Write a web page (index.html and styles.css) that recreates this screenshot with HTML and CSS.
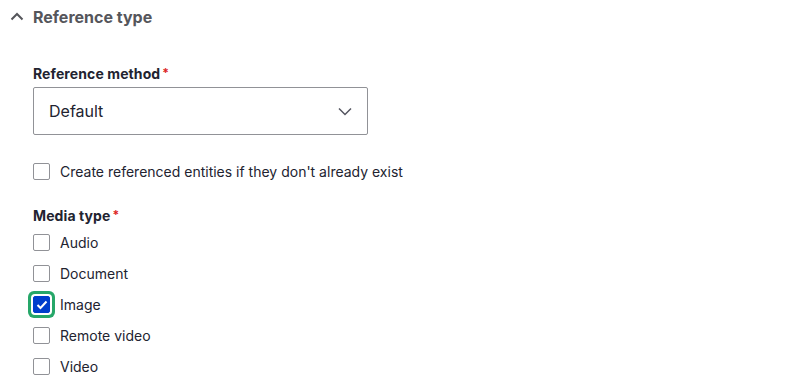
FILE: index.html
```html
<!DOCTYPE html>
<html>
<head>
<meta charset="utf-8">
<link rel="stylesheet" href="styles.css">
</head>
<body>
<details class="details" open>
  <summary class="summary">
    <svg class="summary-icon" width="14" height="9" viewBox="0 0 14 9"><path d="M1.5 7.5L7 2l5.5 5.5" fill="none" stroke="#55565b" stroke-width="2"/></svg>
    <span>Reference type</span>
  </summary>
  <div class="content">
    <div class="field">
      <label class="label">Reference method<span class="req">*</span></label>
      <div class="select">
        <span>Default</span>
        <svg width="14" height="9" viewBox="0 0 14 9"><path d="M1 1.5l6 6 6-6" fill="none" stroke="#545560" stroke-width="1.5"/></svg>
      </div>
    </div>
    <div class="check-row single">
      <span class="box"></span>
      <span class="check-label">Create referenced entities if they don't already exist</span>
    </div>
    <div class="field">
      <label class="label">Media type<span class="req">*</span></label>
      <div class="checks">
        <div class="check-row"><span class="box"></span><span class="check-label">Audio</span></div>
        <div class="check-row"><span class="box"></span><span class="check-label">Document</span></div>
        <div class="check-row"><span class="box checked"><svg width="12" height="10" viewBox="0 0 12 10"><path d="M1.5 5l3 3L10.5 1.5" fill="none" stroke="#fff" stroke-width="2"/></svg></span><span class="check-label">Image</span></div>
        <div class="check-row"><span class="box"></span><span class="check-label">Remote video</span></div>
        <div class="check-row"><span class="box"></span><span class="check-label">Video</span></div>
      </div>
    </div>
  </div>
</details>
</body>
</html>
```
FILE: styles.css
```css
html, body { margin: 0; padding: 0; background: #fff; }
body {
  font-family: Inter, "Noto Sans", sans-serif;
  color: #222330;
  width: 800px;
  height: 391px;
  overflow: hidden;
}
.details { display: block; }
.summary {
  list-style: none;
  display: flex;
  align-items: center;
  height: 34px;
  padding-left: 10px;
  color: #55565b;
  font-weight: 700;
  font-size: 16px;
}
.summary::-webkit-details-marker { display: none; }
.summary-icon { margin-right: 9px; margin-top: -1px; }
.content { padding: 31px 0 0 33px; }
.field { display: flex; flex-direction: column; }
.label {
  font-size: 14px;
  font-weight: 700;
  line-height: 18px;
  margin-bottom: 4px;
  color: #222330;
  letter-spacing: 0.1px;
}
.req {
  color: #dc2323;
  font-size: 12px;
  margin-left: 2px;
  vertical-align: top;
  position: relative;
  top: -1px;
}
.select {
  box-sizing: border-box;
  width: 335px;
  height: 48px;
  border: 1px solid #919297;
  border-radius: 2px;
  display: flex;
  align-items: center;
  justify-content: space-between;
  padding: 0 15px 0 15px;
  font-size: 16px;
  color: #222330;
}
.check-row {
  display: flex;
  align-items: center;
  height: 31px;
}
.check-row.single { margin-top: 21px; margin-bottom: 20px; }
.box {
  box-sizing: border-box;
  width: 17px;
  height: 17px;
  border: 1px solid #919297;
  border-radius: 2px;
  margin-right: 10px;
  display: flex;
  align-items: center;
  justify-content: center;
  flex: none;
}
.box.checked {
  background: #003ecc;
  border-color: #003ecc;
  box-shadow: 0 0 0 2px #fff, 0 0 0 5px #26a769;
  border-radius: 2px;
}
.check-label { font-size: 14px; color: #222330; }
.checks { margin-top: -2px; }
```
